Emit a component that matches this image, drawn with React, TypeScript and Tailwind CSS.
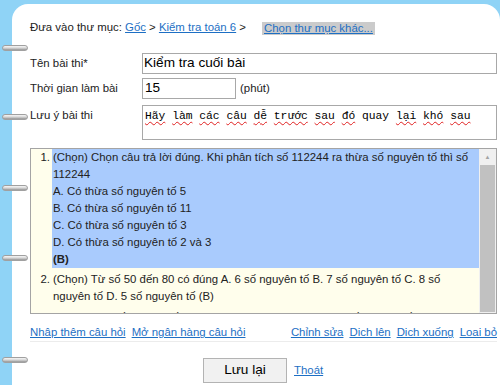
import React from "react";

const rings = [48, 117, 188, 258, 360];

function Ring({ top }: { top: number }) {
  return (
    <div
      className="absolute left-[2px] h-[6px] w-[26px] rounded-full border border-[#a0a0a0] bg-gradient-to-b from-[#f6f6f6] via-[#d6d6d6] to-[#959595]"
      style={{ top: top - 3 }}
    />
  );
}

function Link({ children }: { children: React.ReactNode }) {
  return <a className="cursor-pointer text-[#1d6fc4] underline">{children}</a>;
}

const note = ["Hãy", "làm", "các", "câu", "dễ", "trước", "sau", "đó", "quay", "lại", "khó", "sau"];

function App() {
  return (
    <div className="relative h-[385px] w-[500px] overflow-hidden bg-[#8fd3f6] font-['Liberation_Sans',Arial,sans-serif] text-[11.4px] text-[#222]">
      <div className="ml-[12px] mt-[4px] h-[381px] rounded-t-[16px] bg-white pl-[18px] pr-[3px] pt-[17px]">
        <div className="flex h-[14px] items-center">
          <span>Đưa vào thư mục:&nbsp;</span>
          <Link>Gốc</Link>
          <span>&nbsp;&gt;&nbsp;</span>
          <Link>Kiểm tra toán 6</Link>
          <span>&nbsp;&gt;</span>
          <span className="ml-[16px] bg-[#cbcbcb] px-[2px] leading-[13px] text-[#1d6fc4] underline">
            Chọn thư mục khác...
          </span>
        </div>

        <div className="mt-[18px] flex items-center">
          <div className="w-[112px]">Tên bài thi*</div>
          <div className="flex h-[21px] flex-1 items-center border border-[#a8a8a8] px-[1px] text-[13.6px] text-black">
            Kiểm tra cuối bài
          </div>
        </div>

        <div className="mt-[4px] flex items-center">
          <div className="w-[112px]">Thời gian làm bài</div>
          <div className="flex h-[21px] w-[94px] items-center border border-[#a8a8a8] px-[2px] text-[13.6px] text-black">
            15
          </div>
          <span className="ml-[4px]">(phút)</span>
        </div>

        <div className="mt-[6px] flex">
          <div className="w-[112px] pt-[2px]">Lưu ý bài thi</div>
          <div className="h-[35px] flex-1 border border-[#a8a8a8] px-[2px] pt-[2px] font-['Liberation_Mono',monospace] text-[11.3px] leading-[16px] text-black">
            {note.map((w, i) => (
              <React.Fragment key={i}>
                <span
                  className={
                    w === "quay"
                      ? ""
                      : "underline decoration-[#e02020] decoration-wavy decoration-1 underline-offset-2"
                  }
                >
                  {w}
                </span>
                {i < note.length - 1 ? " " : ""}
              </React.Fragment>
            ))}
          </div>
        </div>

        <div className="mt-[8px] flex h-[166px] overflow-hidden border border-[#a4a4a4] bg-[#fffeec] leading-[17px]">
          <div className="flex-1">
            <div className="flex">
              <div className="w-[21px] pr-[2px] text-right">1.</div>
              <div className="flex-1 bg-[#a9cbfd] pl-[1px] pr-[4px]">
                <div>(Chọn) Chọn câu trả lời đúng. Khi phân tích số 112244 ra thừa số nguyên tố thì số 112244</div>
                <div>A. Có thừa số nguyên tố 5</div>
                <div>B. Có thừa số nguyên tố 11</div>
                <div>C. Có thừa số nguyên tố 3</div>
                <div>D. Có thừa số nguyên tố 2 và 3</div>
                <div className="font-bold">(B)</div>
              </div>
            </div>
            <div className="flex pb-[4px] pt-[3px]">
              <div className="w-[21px] pr-[2px] text-right">2.</div>
              <div className="flex-1 pl-[1px] pr-[4px]">
                (Chọn) Từ số 50 đến 80 có đúng A. 6 số nguyên tố B. 7 số nguyên tố C. 8 số nguyên tố D. 5 số nguyên tố (B)
              </div>
            </div>
            <div className="flex">
              <div className="w-[21px] pr-[2px] text-right">3.</div>
              <div className="flex-1 pl-[1px] pr-[4px]">
                (Chọn) Tìm số nguyên tố p sao cho p + 2 và p + 4 cũng là số nguyên tố
              </div>
            </div>
          </div>
          <div className="flex w-[17px] flex-col bg-[#f0f0f0]">
            <div className="flex h-[16px] items-center justify-center text-[6px] text-[#a3a3a3]">▲</div>
            <div className="mx-[1px] mb-[1px] flex-1 bg-[#c1c1c1]" />
          </div>
        </div>

        <div className="mt-[12px] flex h-[14px] items-center">
          <Link>Nhập thêm câu hỏi</Link>
          <span className="ml-[6px]">
            <Link>Mở ngân hàng câu hỏi</Link>
          </span>
          <div className="ml-auto flex gap-[6px]">
            <Link>Chỉnh sửa</Link>
            <Link>Dịch lên</Link>
            <Link>Dịch xuống</Link>
            <Link>Loại bỏ</Link>
          </div>
        </div>
        <div className="mt-[1px] h-px bg-[#ececec]" />

        <div className="mt-[16px] flex items-center">
          <div className="ml-[173px] flex h-[25px] w-[84px] items-center justify-center border border-[#b3b3b3] bg-[#f1f1f1] text-[13.6px] text-black">
            Lưu lại
          </div>
          <span className="ml-[7px]">
            <Link>Thoát</Link>
          </span>
        </div>
      </div>

      {rings.map((t) => (
        <Ring key={t} top={t} />
      ))}
    </div>
  );
}

export default App;
